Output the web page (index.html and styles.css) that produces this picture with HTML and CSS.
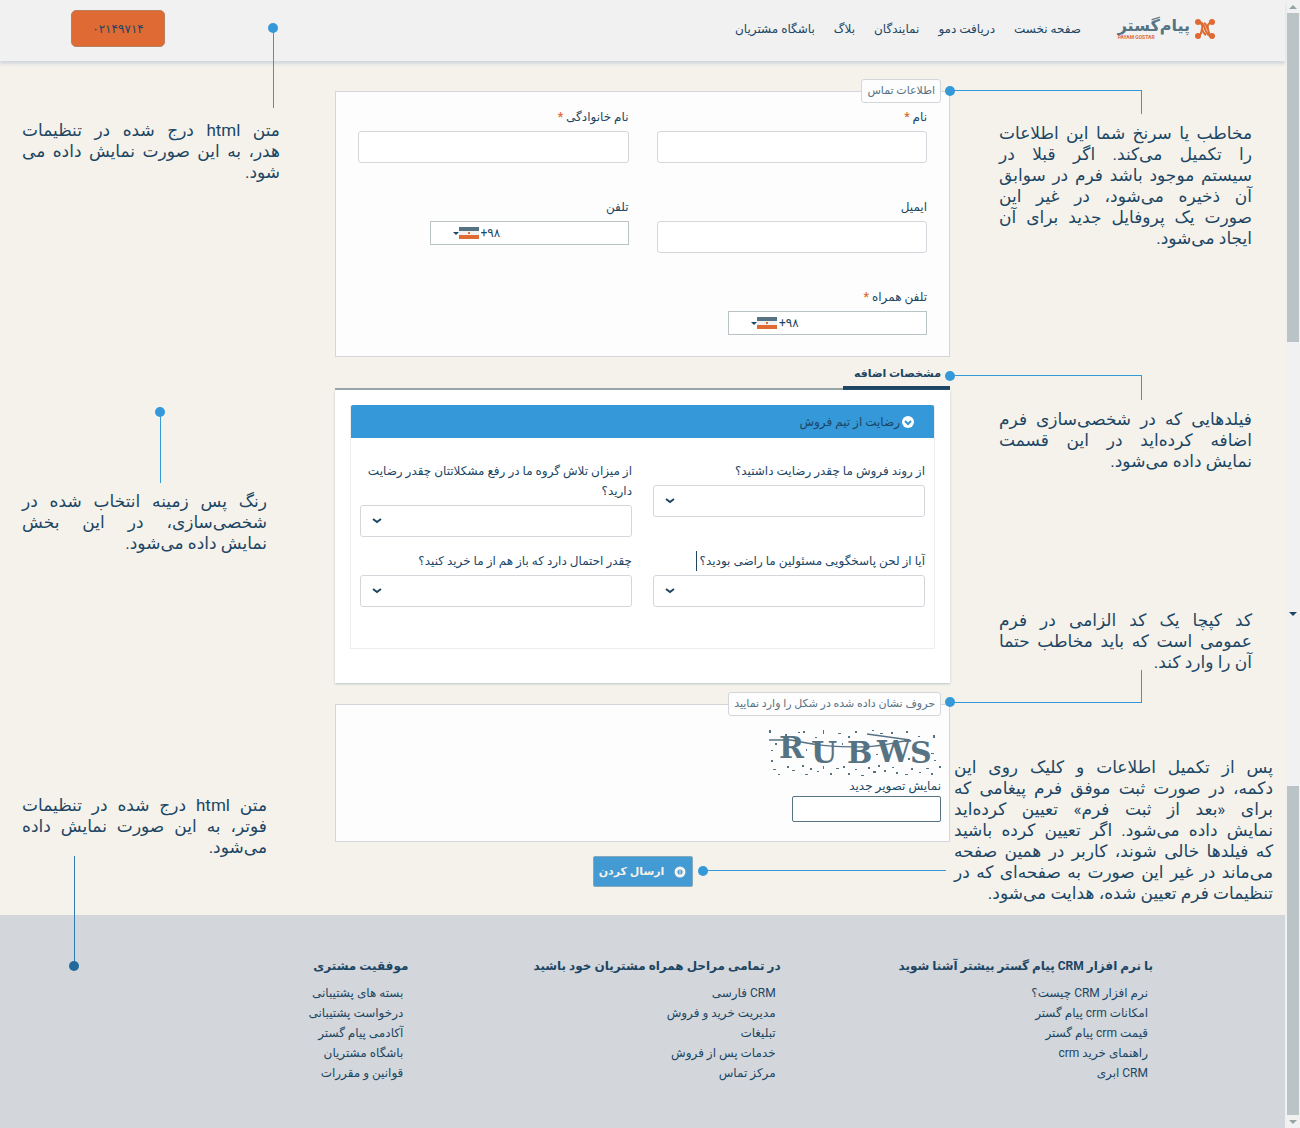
FILE: index.html
```html
<!DOCTYPE html>
<html lang="fa" dir="rtl">
<head>
<meta charset="utf-8">
<title>پیام گستر</title>
<link rel="stylesheet" href="styles.css">
</head>
<body>
<div class="scrollbars" aria-hidden="true">
  <div class="track track-first">
    <span class="arrow arrow-up"></span>
    <span class="thumb"></span>
    <span class="arrow arrow-down arrow-dark"></span>
  </div>
  <div class="track track-last">
    <span class="thumb"></span>
    <span class="arrow arrow-down"></span>
  </div>
</div>
<div class="page">
  <header class="site-header">
    <a class="logo" href="#">
      <svg class="logo-mark" viewBox="0 0 20 20" aria-hidden="true">
        <g fill="none" stroke="#df6a33" stroke-width="2">
          <path d="M3 3 C7 4 8 7 7 10 S7 16 3 17"/>
          <path d="M17 3 C13 4 12 7 13 10 S13 16 17 17"/>
          <path d="M4 3 C9 3 9 8 10 10 S12 17 16 17"/>
          <path d="M9 4 C12 5 11 8 13 10"/>
          <path d="M7 10 C8 13 9 15 11 16"/>
        </g>
        <g fill="#df6a33"><circle cx="3" cy="3" r="3"/><circle cx="17" cy="3" r="3"/><circle cx="3" cy="17" r="3"/><circle cx="17" cy="17" r="3"/></g>
      </svg>
      <span class="logo-words"><span class="logo-name">پیام‌گستر</span><span class="logo-latin">PAYAM GOSTAR</span></span>
    </a>
    <nav class="site-nav">
      <a href="#">صفحه نخست</a>
      <a href="#">دریافت دمو</a>
      <a href="#">نمایندگان</a>
      <a href="#">بلاگ</a>
      <a href="#">باشگاه مشتریان</a>
    </nav>
    <button class="call" type="button">۰۲۱۴۹۷۱۴</button>
  </header>

  <main class="content">
    <div class="notes notes-right">
      <p class="note note-contact"><span class="link"></span>
        <span class="line">مخاطب یا سرنخ شما این اطلاعات</span>
        <span class="line">را تکمیل می‌کند. اگر قبلا در</span>
        <span class="line">سیستم موجود باشد فرم در سوابق</span>
        <span class="line">آن ذخیره می‌شود، در غیر این</span>
        <span class="line">صورت یک پروفایل جدید برای آن</span>
        <span class="line">ایجاد می‌شود.</span></p>
      <p class="note note-fields"><span class="link"></span>
        <span class="line">فیلدهایی که در شخصی‌سازی فرم</span>
        <span class="line">اضافه کرده‌اید در این قسمت</span>
        <span class="line">نمایش داده می‌شود.</span></p>
      <p class="note note-captcha"><span class="link link-up"></span>
        <span class="line">کد کپچا یک کد الزامی در فرم</span>
        <span class="line">عمومی است که باید مخاطب حتما</span>
        <span class="line">آن را وارد کند.</span></p>
      <p class="note note-submit"><span class="link"></span>
        <span class="line">پس از تکمیل اطلاعات و کلیک روی این</span>
        <span class="line">دکمه، در صورت ثبت موفق فرم پیغامی که</span>
        <span class="line">برای «بعد از ثبت فرم» تعیین کرده‌اید</span>
        <span class="line">نمایش داده می‌شود. اگر تعیین کرده باشید</span>
        <span class="line">که فیلدها خالی شوند، کاربر در همین صفحه</span>
        <span class="line">می‌ماند در غیر این صورت به صفحه‌ای که در</span>
        <span class="line">تنظیمات فرم تعیین شده، هدایت می‌شود.</span></p>
    </div>

    <form class="form">
      <fieldset class="box">
        <legend>اطلاعات تماس</legend>
        <div class="contact-grid">
          <div class="field"><label for="first">نام <b class="req">*</b></label><input class="control" id="first" type="text"></div>
          <div class="field"><label for="last">نام خانوادگی <b class="req">*</b></label><input class="control" id="last" type="text"></div>
          <div class="field"><label for="email">ایمیل</label><input class="control" id="email" type="email"></div>
          <div class="field"><label for="phone">تلفن</label>
            <div class="phone"><button type="button" class="country" aria-label="ایران"><span class="caret"></span><svg class="flag" viewBox="0 0 20 12"><path fill="#567384" d="M0 0h20v4H0z"/><path fill="#f1f1f1" d="M0 4h20v4H0z"/><path fill="#df6a33" d="M0 8h20v4H0zM9 5h2v2H9z"/></svg></button><input id="phone" type="tel" value="+۹۸"></div></div>
          <div class="field"><label for="mobile">تلفن همراه <b class="req">*</b></label>
            <div class="phone"><button type="button" class="country" aria-label="ایران"><span class="caret"></span><svg class="flag" viewBox="0 0 20 12"><path fill="#567384" d="M0 0h20v4H0z"/><path fill="#f1f1f1" d="M0 4h20v4H0z"/><path fill="#df6a33" d="M0 8h20v4H0zM9 5h2v2H9z"/></svg></button><input id="mobile" type="tel" value="+۹۸"></div></div>
        </div>
      </fieldset>

      <div class="tabs"><h2 class="tab">مشخصات اضافه</h2></div>
      <section class="panel">
        <div class="group">
          <h3 class="group-head"><svg class="chevron" viewBox="0 0 12 12" aria-hidden="true"><circle cx="6" cy="6" r="6" fill="#fff"/><path d="M3 5l3 3 3-3" fill="none" stroke="#3498d9" stroke-width="2"/></svg>رضایت از تیم فروش</h3>
          <div class="survey-grid">
            <div class="question"><label for="q1">از روند فروش ما چقدر رضایت داشتید؟</label><select class="control" id="q1"><option></option></select></div>
            <div class="question"><label for="q2">از میزان تلاش گروه ما در رفع مشکلاتتان چقدر رضایت<br>دارید؟</label><select class="control" id="q2"><option></option></select></div>
            <div class="question"><label for="q3"><span class="editing">آیا از لحن پاسخگویی مسئولین ما راضی بودید؟</span></label><select class="control" id="q3"><option></option></select></div>
            <div class="question"><label for="q4">چقدر احتمال دارد که باز هم از ما خرید کنید؟</label><select class="control" id="q4"><option></option></select></div>
          </div>
        </div>
      </section>

      <fieldset class="box captcha">
        <legend>حروف نشان داده شده در شکل را وارد نمایید</legend>
        <svg class="captcha-image" viewBox="0 0 172 50" role="img" aria-label="captcha">
          <g class="captcha-letters">
            <text x="10" y="30">R</text><text x="42" y="35">U</text><text x="78" y="35">B</text><text x="108" y="34">W</text><text x="141" y="35">S</text>
          </g>
          <path d="M0 12 L22 12 C45 17 60 19 96 19 C115 18 128 14 141 12 M98 6 L141 12" fill="none" stroke="#567384" stroke-width="1.5"/>
          <path d="M0 2h2v3H0zM16 6h2v2h-2zM29 4h2v1h-2zM34 3h2v2h-2zM46 9h2v1h-2zM54 2h1v4h-1zM69 5h3v1h-3zM79 8h2v2h-2zM86 3h2v2h-2zM103 2h2v1h-2zM111 5h3v1h-3zM122 4h2v2h-2zM137 3h2v2h-2zM149 8h2v1h-2zM157 15h2v2h-2zM164 7h2v3h-2zM2 22h2v1H2zM6 15h2v2H6zM2 32h2v2H2zM4 41h3v1H4zM9 46h2v1H9zM18 38h2v2h-2zM23 42h3v1h-3zM33 37h2v2h-2zM36 46h3v1h-3zM41 40h2v2h-2zM48 43h2v1h-2zM54 38h1v3h-1zM61 45h2v2h-2zM67 40h3v1h-3zM74 38h2v2h-2zM79 45h2v2h-2zM86 41h2v1h-2zM92 47h3v1h-3zM99 39h2v2h-2zM104 43h3v2h-3zM109 37h2v2h-2zM115 42h2v2h-2zM123 39h2v1h-2zM127 44h2v2h-2zM136 46h3v1h-3zM142 40h2v2h-2zM150 44h2v1h-2zM157 40h3v1h-3zM162 45h2v2h-2zM170 38h2v2h-2zM162 25h3v1h-3zM165 32h2v1h-2zM37 21h1v2h-1zM73 15h1v2h-1zM107 26h2v1h-2zM139 30h2v2h-2z" fill="#567384"/>
        </svg>
        <label class="refresh" for="code">نمایش تصویر جدید</label>
        <input class="code" id="code" type="text">
      </fieldset>

      <button class="submit" type="submit"><svg viewBox="0 0 12 12" aria-hidden="true"><circle cx="6" cy="6" r="4" fill="none" stroke="#f5f2eb" stroke-width="3"/><path d="M6 4v4" stroke="#dfe5e8" stroke-width="1"/></svg>ارسال کردن</button>
    </form>

    <div class="notes notes-left">
      <p class="note note-header"><span class="pin"></span>
        <span class="line">متن html درج شده در تنظیمات</span>
        <span class="line">هدر، به این صورت نمایش داده می</span>
        <span class="line">شود.</span></p>
      <p class="note note-background"><span class="pin"></span>
        <span class="line">رنگ پس زمینه انتخاب شده در</span>
        <span class="line">شخصی‌سازی، در این بخش</span>
        <span class="line">نمایش داده می‌شود.</span></p>
      <p class="note note-footer"><span class="pin pin-down"></span>
        <span class="line">متن html درج شده در تنظیمات</span>
        <span class="line">فوتر، به این صورت نمایش داده</span>
        <span class="line">می‌شود.</span></p>
    </div>
  </main>

  <footer class="site-footer">
    <section><h4>با نرم افزار CRM پیام گستر بیشتر آشنا شوید</h4>
      <ul><li><a href="#">نرم افزار CRM چیست؟</a></li><li><a href="#">امکانات crm پیام گستر</a></li><li><a href="#">قیمت crm پیام گستر</a></li><li><a href="#">راهنمای خرید crm</a></li><li><a href="#">CRM ابری</a></li></ul></section>
    <section><h4>در تمامی مراحل همراه مشتریان خود باشید</h4>
      <ul><li><a href="#">CRM فارسی</a></li><li><a href="#">مدیریت خرید و فروش</a></li><li><a href="#">تبلیغات</a></li><li><a href="#">خدمات پس از فروش</a></li><li><a href="#">مرکز تماس</a></li></ul></section>
    <section><h4>موفقیت مشتری</h4>
      <ul><li><a href="#">بسته های پشتیبانی</a></li><li><a href="#">درخواست پشتیبانی</a></li><li><a href="#">آکادمی پیام گستر</a></li><li><a href="#">باشگاه مشتریان</a></li><li><a href="#">قوانین و مقررات</a></li></ul></section>
  </footer>
</div>
</body>
</html>
```
FILE: styles.css
```css
* { box-sizing: border-box; }

body {
  margin: 0;
  display: flex;
  min-height: 100vh;
  background: #f5f2eb;
  color: #1c4664;
  font: 12px/20px Roboto, "DejaVu Sans", sans-serif;
}

a { color: inherit; text-decoration: none; }
button, input, select { font: inherit; color: inherit; margin: 0; }
h2, h3, h4, p, ul { margin: 0; padding: 0; }

/* scroll bars */
.scrollbars { flex: 0 0 15px; display: flex; flex-direction: column; background: #f1f1f1; }
.track { display: flex; flex-direction: column; align-items: center; }
.track-first { flex: 0 0 620px; justify-content: flex-start; }
.track-last { flex: 1; justify-content: flex-end; }
.thumb { width: 12px; height: 329px; background: #bac4c7; }
.arrow { height: 13px; display: flex; align-items: center; }
.arrow::before { content: ""; border: 4px solid transparent; border-top: 4px solid #95a5a6; border-bottom: 0; }
.arrow-up::before { border-top: 0; border-bottom: 4px solid #95a5a6; }
.arrow-dark { margin-top: auto; }
.arrow-dark::before { border-top-color: #1c4664; }

.page { flex: 1; min-width: 0; display: flex; flex-direction: column; }

/* header */
.site-header {
  display: flex;
  align-items: center;
  height: 61px;
  padding: 0 70px 4px 71px;
  background: #f1f1f1;
  box-shadow: 0 3px 3px #d3d7dc;
  white-space: nowrap;
}
.logo { display: flex; gap: 5px; align-items: center; width: 97px; }
.logo-mark { width: 20px; height: 20px; flex: none; }
.logo-words { display: flex; flex-direction: column; align-items: flex-end; }
.logo-name { font: bold 16px/18px "DejaVu Sans", sans-serif; color: #567384; }
.logo-latin { font: bold 5px/5px Roboto, sans-serif; color: #df6a33; direction: ltr; }
.site-nav { display: flex; gap: 19px; margin-right: 37px; font-size: 12px; }
.call {
  width: 94px;
  height: 37px;
  margin-right: auto;
  padding: 0;
  border: 1px solid #b9805f;
  border-radius: 5px;
  background: #df6a33;
}

/* main area */
.content { display: grid; grid-template-columns: 335px minmax(0, 1fr) 335px; }
.notes { display: flex; flex-direction: column; }
.notes-right { padding-right: 33px; }
.notes-left { padding-left: 22px; align-items: flex-end; }
.note { position: relative; font-size: 17px; line-height: 21px; width: 253px; }
.line { display: block; white-space: nowrap; text-align: justify; text-align-last: justify; }
.line:last-child { text-align-last: start; }
.note-contact { margin-top: 62px; }
.note-fields { margin-top: 160px; }
.note-captcha { margin-top: 138px; }
.note-submit { margin-top: 84px; margin-right: -21px; width: 319px; }
.note-header { margin-top: 59px; width: 258px; }
.note-background { margin-top: 308px; width: 245px; }
.note-footer { margin-top: 241px; width: 245px; }

/* connectors from a note to the part it explains */
.link, .pin { position: absolute; z-index: 1; }
.link { left: -49px; top: -33px; width: 192px; height: 24px; border: solid #3498d9; border-width: 1px 1px 0 0; }
.note-fields .link { top: -34px; height: 25px; }
.link-up { top: 60px; height: 33px; border-width: 0 1px 1px 0; }
.note-submit .link { left: -251px; top: 113px; width: 243px; height: 1px; }
.pin { width: 1px; background: #3498d9; }
.note-header .pin { left: 251px; top: -92px; height: 80px; }
.note-background .pin { left: 138px; top: -79px; height: 71px; }
.note-footer .pin { left: 52px; top: 61px; height: 110px; background: #2f7cb0; }
.link::before, .pin::before {
  content: "";
  position: absolute;
  left: -5px;
  top: -5px;
  width: 10px;
  height: 10px;
  border-radius: 50%;
  background: #3498d9;
}
.link-up::before, .pin-down::before { top: auto; bottom: -5px; }
.pin-down::before { background: #236a9c; }

/* form */
.form { display: flex; flex-direction: column; padding: 18px 0 28px; }
.box { margin: 0; min-width: 0; padding: 4px 22px 13px; border: 1px solid #d3d7dc; background: #fdfdfd; }
.box legend {
  height: 24px;
  padding: 0 5px;
  border: 1px solid #d3d7dc;
  border-radius: 3px;
  background: #fdfdfd;
  color: #567384;
  line-height: 22px;
  font-size: 11px;
  margin-right: -14px;
}
.contact-grid { display: grid; grid-template-columns: 1fr 1fr; gap: 34px 28px; }
.field { display: flex; flex-direction: column; gap: 4px; min-height: 56px; }
.req { color: #df6a33; }
.control { width: 100%; height: 32px; border: 1px solid #d3d7dc; border-radius: 3px; background-color: #fff; }
.phone { display: flex; direction: ltr; align-items: center; width: 199px; height: 24px; padding-left: 22px; border: 1px solid #bac4c7; background: #fff; }
.country { display: flex; align-items: center; padding: 0; border: 0; background: none; }
.caret { border: 3px solid transparent; border-top-color: #1c4664; border-bottom: 0; }
.flag { width: 20px; height: 12px; }
.phone input { flex: 1; min-width: 0; height: 20px; padding: 0 2px; border: 0; background: none; font-size: 12px; }

.tabs { height: 33px; border-bottom: 2px solid #95a5a6; }
.tab {
  width: 107px;
  height: 33px;
  padding-right: 9px;
  border-bottom: 4px solid #1c4664;
  font-size: 11px;
  line-height: 33px;
  white-space: nowrap;
}
.panel { padding: 15px 15px 34px; background: #fff; box-shadow: 0 1px 2px #bac4c7; }
.group { border: 1px solid #ededed; border-top: 0; padding-bottom: 41px; }
.group-head {
  display: flex;
  align-items: center;
  gap: 2px;
  height: 33px;
  padding-right: 20px;
  border-radius: 2px 2px 0 0;
  background: #3498d9;
  font-size: 12px;
  font-weight: normal;
}
.chevron { width: 12px; height: 12px; }
.survey-grid { display: grid; grid-template-columns: 1fr 1fr; gap: 14px 21px; padding: 23px 9px 0; }
.question { display: flex; flex-direction: column; gap: 4px; }
.question label { white-space: nowrap; }
.question select {
  appearance: none;
  background: #fff url("data:image/svg+xml,%3Csvg xmlns='http://www.w3.org/2000/svg' width='10' height='8'%3E%3Cpath d='M1 2l4 3 4-3' fill='none' stroke='%231c4664' stroke-width='2'/%3E%3C/svg%3E") no-repeat 11px center;
}
.editing { display: inline-block; padding-left: 3px; border-left: 1px solid #1c4664; }

.captcha { margin-top: 9px; padding: 12px 8px 19px; display: flex; flex-direction: column; align-items: flex-start; }
.captcha legend { margin-right: 0; }
.captcha-image { width: 172px; height: 50px; }
.captcha-letters { font: bold 30px "DejaVu Serif", serif; fill: #567384; direction: ltr; }
.refresh { margin-top: -2px; }
.code { width: 149px; height: 26px; border: 1px solid #567384; border-radius: 2px; background: #fff; }
.submit {
  display: flex;
  align-items: center;
  justify-content: center;
  align-self: center;
  gap: 10px;
  width: 100px;
  height: 31px;
  margin-top: 14px;
  padding: 0;
  border: 1px solid #85a8bd;
  border-radius: 2px;
  background: #449ad2;
  color: #f5f2eb;
  font-size: 11px;
  font-weight: bold;
  white-space: nowrap;
}
.submit svg { width: 12px; height: 12px; flex: none; }

/* footer */
.site-footer {
  flex: 1;
  display: grid;
  grid-template-columns: repeat(3, 1fr);
  padding: 41px 132px 40px 36px;
  background: #d3d6db;
  white-space: nowrap;
}
.site-footer h4 { font-size: 12px; line-height: 20px; margin-bottom: 7px; }
.site-footer ul { list-style: none; padding-right: 5px; font-size: 12px; }
```
